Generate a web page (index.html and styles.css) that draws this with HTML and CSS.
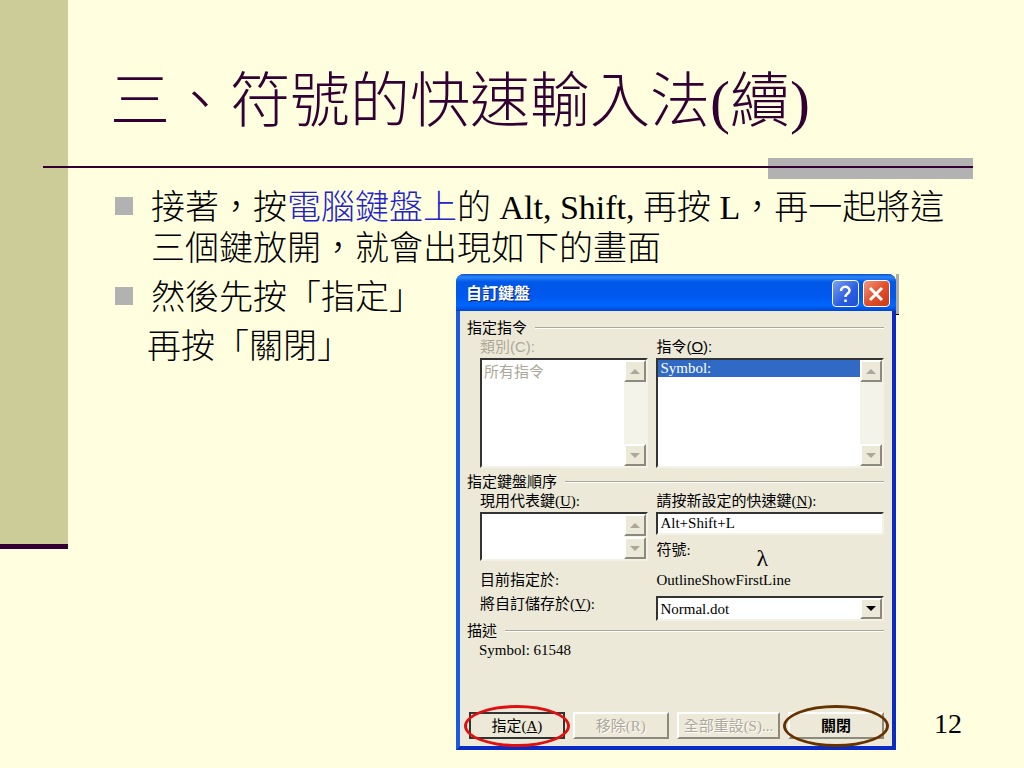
FILE: index.html
```html
<!DOCTYPE html>
<html lang="zh-Hant">
<head>
  <meta charset="UTF-8">
  <title>三、符號的快速輸入法(續)</title>
  <link rel="stylesheet" href="styles.css">
</head>
<body>

  <div class="slide">
    <div class="side"></div>

    <div class="main">
      <h1>三、符號的快速輸入法(續)</h1>
      <div class="rule"><div class="accent"></div></div>

      <ul class="points">
        <li>接著，按<span class="blue">電腦鍵盤上</span>的 Alt, Shift, 再按 L，再一起將這三個鍵放開，就會出現如下的畫面</li>
      </ul>

      <div class="lower">
        <div class="left">
          <ul class="points">
            <li>然後先按「指定」</li>
          </ul>
          <p>再按「關閉」</p>
        </div>

        <!-- DIALOG -->
        <form class="dialog" onsubmit="return false">
          <div class="titlebar">
            <span class="caption">自訂鍵盤</span>
            <button type="button" class="help" aria-label="Help">
              <svg viewBox="0 0 24 24" width="24" height="24"><path d="M8 9C8 3.500 16.500 3.500 16.500 8.500C16.500 11.500 12.500 11.500 12.500 15M12.500 17.500V20" fill="none" stroke="#fff" stroke-width="2.500"/></svg>
            </button>
            <button type="button" class="close" aria-label="Close">
              <svg viewBox="0 0 24 24" width="24" height="24"><path d="M6 6L18 18M18 6L6 18" fill="none" stroke="#fff" stroke-width="3"/></svg>
            </button>
          </div>

          <div class="content">
            <div class="legend">指定指令</div>
            <div class="cols">
              <div class="field">
                <label for="category" class="sans off">類別(C):</label>
                <div class="sunken tall">
                  <select id="category" size="5" disabled>
                    <option>所有指令</option>
                  </select>
                  <div class="scroll">
                    <button type="button" disabled aria-label="Up"><svg viewBox="0 0 10 5" width="10" height="5"><path d="M0 5L5 0L10 5Z"/></svg></button>
                    <button type="button" disabled aria-label="Down"><svg viewBox="0 0 10 5" width="10" height="5"><path d="M0 0L5 5L10 0Z"/></svg></button>
                  </div>
                </div>
              </div>
              <div class="field">
                <label for="command" class="sans">指令(<u>O</u>):</label>
                <div class="sunken tall">
                  <select id="command" size="5">
                    <option selected>Symbol:</option>
                  </select>
                  <div class="scroll">
                    <button type="button" disabled aria-label="Up"><svg viewBox="0 0 10 5" width="10" height="5"><path d="M0 5L5 0L10 5Z"/></svg></button>
                    <button type="button" disabled aria-label="Down"><svg viewBox="0 0 10 5" width="10" height="5"><path d="M0 0L5 5L10 0Z"/></svg></button>
                  </div>
                </div>
              </div>
            </div>

            <div class="legend">指定鍵盤順序</div>
            <div class="cols">
              <div class="field">
                <label for="current">現用代表鍵(<u>U</u>):</label>
                <div class="sunken short">
                  <select id="current" size="2"></select>
                  <div class="scroll">
                    <button type="button" disabled aria-label="Up"><svg viewBox="0 0 10 5" width="10" height="5"><path d="M0 5L5 0L10 5Z"/></svg></button>
                    <button type="button" disabled aria-label="Down"><svg viewBox="0 0 10 5" width="10" height="5"><path d="M0 0L5 5L10 0Z"/></svg></button>
                  </div>
                </div>
              </div>
              <div class="field">
                <label for="newkey">請按新設定的快速鍵(<u>N</u>):</label>
                <input class="sunken" type="text" id="newkey" value="Alt+Shift+L">
                <div class="symbol"><span>符號:</span><span class="lambda">λ</span></div>
              </div>
              <span>目前指定於:</span>
              <span>OutlineShowFirstLine</span>
              <label for="save">將自訂儲存於(<u>V</u>):</label>
              <div class="sunken combo">
                <select id="save"><option>Normal.dot</option></select>
                <span class="arrow"><svg viewBox="0 0 10 5" width="10" height="5"><path d="M0 0L5 5L10 0Z"/></svg></span>
              </div>
            </div>

            <div class="legend">描述</div>
            <div class="desc">Symbol: 61548</div>

            <div class="buttons">
              <button type="button" class="default ring red">指定(<u>A</u>)</button>
              <button type="button" disabled>移除(R)</button>
              <button type="button" class="wide" disabled>全部重設(S)...</button>
              <button type="button" class="ring brown">關閉</button>
            </div>
          </div>
        </form>

        <div class="page">12</div>
      </div>
    </div>
  </div>

</body>
</html>
```

FILE: styles.css
```css
* {
  box-sizing: border-box;
}
body {
  margin: 0;
  background: #ffffdf;
  color: #000;
  font-family: "Liberation Serif", "Noto Sans CJK TC", serif;
}
button, input, select {
  font: inherit;
  color: inherit;
}

.slide {
  display: flex;
  min-height: 100vh;
}
.side {
  flex: none;
  width: 68px;
  height: 549px;
  background: #cccc99;
  border-bottom: 5px solid #330033;
}
.main {
  flex: 1;
  min-width: 0;
  padding: 66px 51px 0 45px;
}

h1 {
  margin: 0 0 0 -3px;
  font-size: 60px;
  line-height: 72px;
  font-weight: 300;
  color: #330033;
}

/* thin line with the grey block at its right end */
.rule {
  display: flex;
  justify-content: flex-end;
  height: 21px;
  margin: 20px 0 8px -70px;
  background: linear-gradient(#330033, #330033) 0 8px / 100% 2px no-repeat;
}
.accent {
  width: 22%;
  background: linear-gradient(#330033, #330033) 0 8px / 100% 2px no-repeat #b2b2b2;
}

.points {
  margin: 0;
  padding: 0;
  list-style: none;
}
.points li {
  position: relative;
  padding-left: 38px;
}
.points li::before {
  content: "";
  position: absolute;
  left: 2px;
  top: 10px;
  width: 18px;
  height: 18px;
  background: #b2b2b2;
}
.points li, .left p {
  font-size: 34px;
  line-height: 41px;
  font-weight: 300;
}
.blue {
  color: #2222cc;
}

.lower {
  display: flex;
  margin-top: 5px;
}
.left {
  flex: 1;
  padding-top: 3px;
}
.left p {
  margin: 8px 0 0 34px;
}
.page {
  align-self: flex-end;
  width: 77px;
  padding: 0 11px 10px 0;
  text-align: right;
  font-size: 28px;
  line-height: 32px;
}

/* dialog */
.dialog {
  position: relative;
  width: 440px;
  font-size: 15px;
  line-height: 20px;
  background: #ece9d8;
  border: 4px solid #0a2bc4;
  border-top: none;
  border-left-color: #1c5ae0;
  border-radius: 8px 8px 0 0;
}
/* edge of the window behind */
.dialog::after {
  content: "";
  position: absolute;
  top: 0;
  right: -7px;
  width: 3px;
  height: 40px;
  background: #b0ada0;
  border-bottom: 1px solid #000;
}
.titlebar {
  display: flex;
  align-items: center;
  gap: 4px;
  height: 37px;
  margin: 0 -4px;
  padding: 2px 6px 0 10px;
  border-radius: 8px 8px 0 0;
  background: linear-gradient(#0a4fc8, #2a86f8 3px, #0058e8 8px, #0058ee 60%, #0066ff 85%, #0046d0);
}
.caption {
  flex: 1;
  color: #fff;
  font-size: 16px;
  font-weight: bold;
  text-shadow: 1px 1px #0a2a80;
}
.titlebar button {
  width: 27px;
  height: 27px;
  padding: 0;
  border: 1px solid #fff;
  border-radius: 4px;
}
.titlebar svg {
  display: block;
}
.help {
  background: linear-gradient(135deg, #7aa0f4, #2a5ce0 60%, #2050d0);
}
.close {
  background: linear-gradient(135deg, #f09a80, #e0502c 50%, #c83c14);
}

.content {
  padding: 7px 8px 7px 7px;
}
.legend {
  display: flex;
  align-items: center;
  gap: 8px;
}
.legend::after {
  content: "";
  flex: 1;
  border-top: 1px solid #aca899;
  border-bottom: 1px solid #fff;
}
.cols {
  display: grid;
  grid-template-columns: 168fr 227fr;
  column-gap: 8px;
  padding-left: 13px;
  margin-bottom: 4px;
}
.cols + .legend + .cols {
  margin-bottom: 0;
}
.field {
  display: flex;
  flex-direction: column;
}
.field label {
  line-height: 18px;
  padding-bottom: 2px;
}
.sans {
  font-family: "Liberation Sans", "Noto Sans CJK TC", sans-serif;
}
.off {
  color: #aca899;
}
.sunken {
  display: flex;
  background: #fff;
  border: 2px solid;
  border-color: #333 #f4f2e8 #f4f2e8 #333;
}
.tall {
  height: 110px;
}
.short {
  height: 49px;
}
.sunken select {
  appearance: none;
  flex: 1;
  min-width: 0;
  padding: 0;
  border: none;
  border-radius: 0;
  outline: none;
  background: #fff;
  overflow: hidden;
}
.sunken select:disabled {
  opacity: 1;
}
.sunken option {
  min-height: 0;
  padding: 0 2px;
  line-height: 16px;
}
#category option {
  color: #aca899;
}
#command option:checked {
  color: #fff;
  background: linear-gradient(#316ac5, #316ac5);
}
.scroll {
  display: flex;
  flex-direction: column;
  justify-content: space-between;
  background: #f4f3ea;
}
.scroll button, .arrow {
  display: flex;
  align-items: center;
  justify-content: center;
  width: 22px;
  height: 22px;
  padding: 0;
  background: #ece9d8;
  border: 2px solid;
  border-color: #fff #8c8a7c #8c8a7c #fff;
}
.scroll svg {
  fill: #aca899;
}
input.sunken {
  width: 100%;
  height: 23px;
  padding: 0 2px;
}
.symbol {
  display: flex;
  gap: 66px;
  padding-top: 5px;
  line-height: 20px;
}
.lambda {
  font-size: 24px;
  line-height: 36px;
  height: 30px;
}
.cols > label {
  padding-top: 4px;
}
.cols > .combo {
  margin-top: 6px;
}
.combo {
  height: 25px;
}
.combo select {
  padding-left: 2px;
}
.arrow {
  height: 21px;
}

.desc {
  padding-left: 12px;
  line-height: 18px;
}
.buttons {
  display: flex;
  gap: 8px;
  margin-top: 53px;
  padding-left: 2px;
}
.buttons button {
  position: relative;
  flex: 96;
  height: 27px;
  padding: 0;
  white-space: nowrap;
  background: #ece9d8;
  border: 2px solid;
  border-color: #fff #8c8a7c #8c8a7c #fff;
}
.buttons .wide {
  flex: 104;
}
.buttons button:disabled {
  color: #aca899;
  text-shadow: 1px 1px #fff;
}
.buttons .default {
  border-color: #333;
}
.ring::after {
  content: "";
  position: absolute;
  inset: -9px -7px -10px;
  border: 3px solid #e01010;
  border-radius: 50%;
}
.brown::after {
  border-color: #663300;
}
.buttons .brown {
  font-weight: bold;
}
```
